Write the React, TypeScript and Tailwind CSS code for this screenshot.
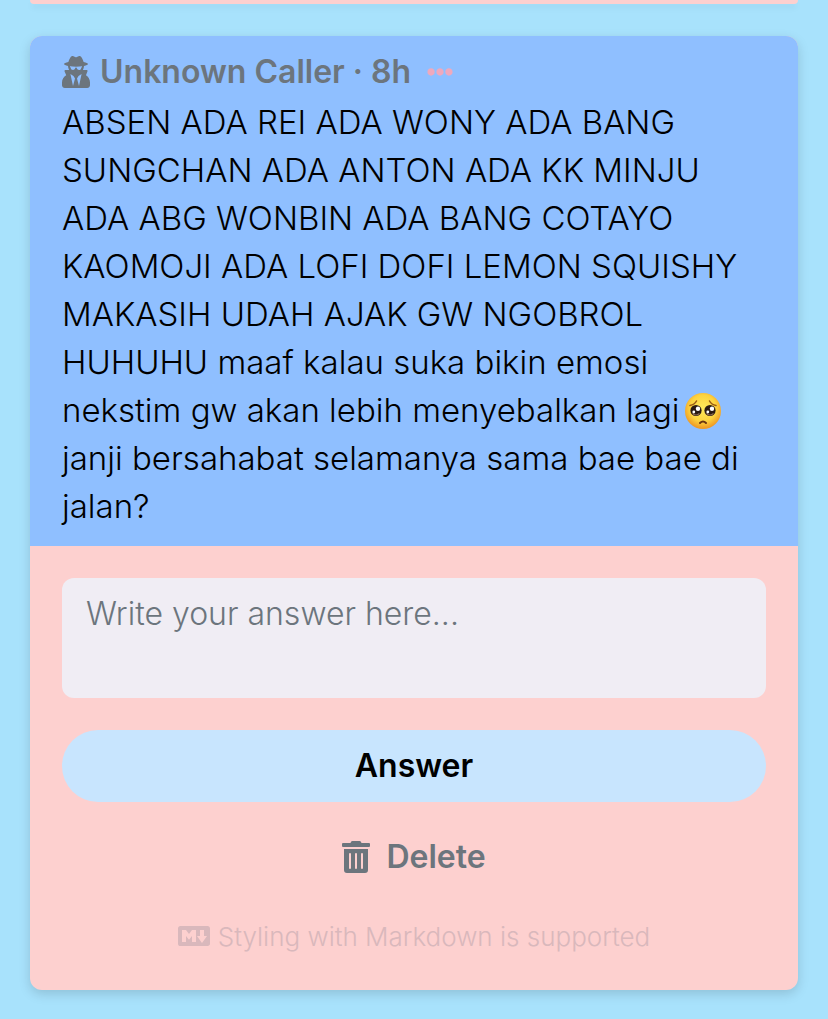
import { FaEllipsisH, FaTrashAlt, FaUserSecret } from 'react-icons/fa';

const questionLines = [
    'ABSEN ADA REI ADA WONY ADA BANG',
    'SUNGCHAN ADA ANTON ADA KK MINJU',
    'ADA ABG WONBIN ADA BANG COTAYO',
    'KAOMOJI ADA LOFI DOFI LEMON SQUISHY',
    'MAKASIH UDAH AJAK GW NGOBROL',
    'HUHUHU maaf kalau suka bikin emosi',
    'nekstim gw akan lebih menyebalkan lagi',
    'janji bersahabat selamanya sama bae bae di',
    'jalan?',
];

const EMOJI_LINE = 6;

function PleadingFace() {
    return (
        <svg viewBox="0 0 38 38" role="img" aria-label="pleading face" className="mb-1 ml-1 inline-block size-[38px] align-middle">
            <defs>
                <radialGradient id="face" cx="50%" cy="42%" r="56%">
                    <stop offset="0" stopColor="#ffea5c" />
                    <stop offset="0.65" stopColor="#fdd33f" />
                    <stop offset="1" stopColor="#ef9a24" />
                </radialGradient>
            </defs>
            <circle cx="19" cy="19" r="18" fill="url(#face)" />
            <path d="M6 13.500q4.500-.8 6.500-4.500M32 13.500q-4.500-.8-6.500-4.500" stroke="#9a5a14" strokeWidth="1.500" fill="none" strokeLinecap="round" />
            <circle cx="12" cy="18.500" r="5.600" fill="#2b1a12" />
            <circle cx="26" cy="18.500" r="5.600" fill="#2b1a12" />
            <path d="M8.500 21.500q3.500 3 7 0M22.500 21.500q3.500 3 7 0" stroke="#8d6a52" strokeWidth="1.200" fill="none" />
            <g fill="#fff">
                <circle cx="14" cy="16.800" r="2.200" />
                <circle cx="28" cy="16.800" r="2.200" />
                <circle cx="9.800" cy="20" r="1.400" />
                <circle cx="23.800" cy="20" r="1.400" />
            </g>
            <path d="M16 31q3-3 6 0" stroke="#6b3510" strokeWidth="2" fill="none" strokeLinecap="round" />
        </svg>
    );
}

function MarkdownIcon() {
    return (
        <svg viewBox="0 3 16 10" fill="currentColor" aria-hidden="true" className="h-5 w-8">
            <path fillRule="evenodd" d="M14.850 3H1.150C.52 3 0 3.520 0 4.150v7.690C0 12.480.52 13 1.150 13h13.690c.64 0 1.150-.52 1.150-1.150v-7.700C16 3.520 15.480 3 14.850 3zM9 11H7V8L5.500 9.920 4 8v3H2V5h2l1.500 2L7 5h2v6zm2.990.5L9.500 8H11V5h2v3h1.500l-2.510 3.500z" />
        </svg>
    );
}

function QuestionHeader() {
    return (
        <header className="flex h-12 items-center text-[#6c757d]">
            <FaUserSecret className="h-8 w-7 shrink-0" />
            <h2 className="ml-2.5 text-[32px] font-semibold">Unknown Caller · 8h</h2>
            <button type="button" aria-label="More options" className="ml-4 text-[#efa9bd]">
                <FaEllipsisH className="size-[26px]" />
            </button>
        </header>
    );
}

export default function App() {
    return (
        <main className="min-h-screen bg-[#a8e2fc] px-[30px] pb-7 font-['Inter',sans-serif] text-black">
            <div className="h-1 rounded-b-xl bg-[#fdd0cf] shadow-md" />

            <article className="mt-8 overflow-hidden rounded-xl bg-[#fdd0cf] shadow-[0_4px_12px_rgba(0,0,0,0.15)]">
                <section className="bg-[#8fbfff] px-8 pt-3 pb-4">
                    <QuestionHeader />
                    <p className="mt-0.5 text-[33px] leading-[48px] font-light">
                        {questionLines.map((line, i) => (
                            <span key={line} className="block h-12 whitespace-nowrap">
                                {line}
                                {i === EMOJI_LINE && <PleadingFace />}
                            </span>
                        ))}
                    </p>
                </section>

                <form className="flex flex-col px-8 pt-8 pb-[34px]">
                    <textarea
                        aria-label="Your answer"
                        placeholder="Write your answer here..."
                        className="h-[120px] w-full resize-none rounded-xl bg-[#f0edf4] px-6 py-3 text-[32px] leading-[48px] font-light outline-none placeholder:text-[#6c757d]"
                    />
                    <button type="button" className="mt-8 h-[72px] rounded-full bg-[#c8e5fe] text-[32px] font-semibold">
                        Answer
                    </button>
                    <button type="button" className="mt-5 flex h-[70px] items-center justify-center gap-4 text-[32px] font-semibold text-[#6c757d]">
                        <FaTrashAlt className="h-8 w-7" />
                        Delete
                    </button>
                    <p className="mt-6 flex h-10 items-center justify-center gap-2 text-[26px] font-light text-[#d9b8bc]">
                        <MarkdownIcon />
                        Styling with Markdown is supported
                    </p>
                </form>
            </article>
        </main>
    );
}
